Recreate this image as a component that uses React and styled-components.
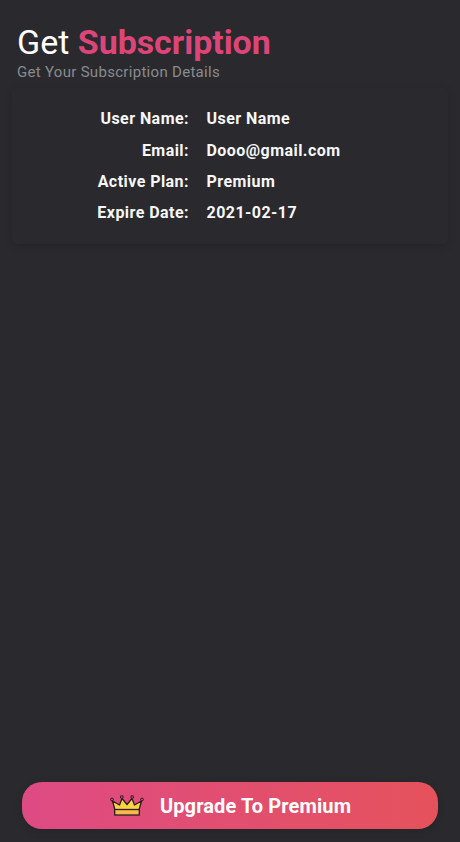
import React from "react";
import styled, { createGlobalStyle } from "styled-components";

const Global = createGlobalStyle`
  html, body { margin: 0; padding: 0; background: #2a2a2e; }
  * { box-sizing: border-box; }
`;

const Page = styled.div`
  width: 460px;
  height: 842px;
  background: #2a2a2e;
  font-family: Roboto, "Liberation Sans", sans-serif;
  display: flex;
  flex-direction: column;
  overflow: hidden;
`;

const Header = styled.header`
  padding: 23px 17px 0;
`;

const Title = styled.h1`
  margin: 0;
  font-size: 34px;
  line-height: 38px;
  font-weight: 400;
  color: #ffffff;
`;

const Accent = styled.span`
  font-weight: 700;
  letter-spacing: -0.05px;
  color: #dd4579;
`;

const Subtitle = styled.p`
  margin: 1px 0 0;
  font-size: 15px;
  line-height: 20px;
  letter-spacing: 0.3px;
  color: #8a8a8f;
`;

const Card = styled.section`
  margin: 6px 12px 0;
  padding: 15px 0 15px;
  background: #2a2a2e;
  box-shadow: 0 2px 8px rgba(0, 0, 0, 0.14);
  border-radius: 4px;
  display: flex;
  flex-direction: column;
`;

const Row = styled.div`
  display: grid;
  grid-template-columns: 177px 1fr;
  column-gap: 17.5px;
  height: 31.4px;
  align-items: center;
  font-size: 16px;
  font-weight: 700;
  letter-spacing: 0.45px;
  color: #f7f7f7;
`;

const Label = styled.span`
  text-align: right;
`;

const Value = styled.span``;

const Spacer = styled.div`
  flex: 1;
`;

const UpgradeButton = styled.button`
  margin: 0 22px 13px;
  height: 47px;
  border: 0;
  border-radius: 20px;
  background: linear-gradient(90deg, #de4b84 0%, #e5525c 100%);
  box-shadow: 0 2px 8px rgba(0, 0, 0, 0.16);
  display: flex;
  align-items: center;
  justify-content: center;
  gap: 16px;
  padding: 0 0 0 1px;
  color: #ffffff;
  font-family: inherit;
  font-size: 20px;
  font-weight: 700;
  letter-spacing: 0.12px;
`;

const Crown = () => (
  <svg width="34" height="21" viewBox="0 0 34 21" fill="none">
    <path d="M5 15 L2.5 6 L9.5 10 L12 3.5 L17 9.5 L22 3.5 L24.5 10 L31.5 6 L29 15 Z" fill="#fbd43f" stroke="#2a1d22" strokeWidth="1.3" strokeLinejoin="round" />
    <rect x="4.7" y="14.5" width="24.6" height="5.5" fill="#f8b84a" stroke="#2a1d22" strokeWidth="1.3" />
    <circle cx="2" cy="4.5" r="1.4" fill="#e0497a" stroke="#2a1d22" />
    <circle cx="11.8" cy="2" r="1.4" fill="#e0497a" stroke="#2a1d22" />
    <circle cx="22.2" cy="2" r="1.4" fill="#e0497a" stroke="#2a1d22" />
    <circle cx="32" cy="4.5" r="1.4" fill="#e0497a" stroke="#2a1d22" />
  </svg>
);

const rows = [
  ["User Name:", "User Name"],
  ["Email:", "Dooo@gmail.com"],
  ["Active Plan:", "Premium"],
  ["Expire Date:", "2021-02-17"],
];

export default function App() {
  return (
    <Page>
      <Global />
      <Header>
        <Title>
          Get <Accent>Subscription</Accent>
        </Title>
        <Subtitle>Get Your Subscription Details</Subtitle>
      </Header>
      <Card>
        {rows.map(([label, value]) => (
          <Row key={label}>
            <Label>{label}</Label>
            <Value>{value}</Value>
          </Row>
        ))}
      </Card>
      <Spacer />
      <UpgradeButton>
        <Crown />
        Upgrade To Premium
      </UpgradeButton>
    </Page>
  );
}
